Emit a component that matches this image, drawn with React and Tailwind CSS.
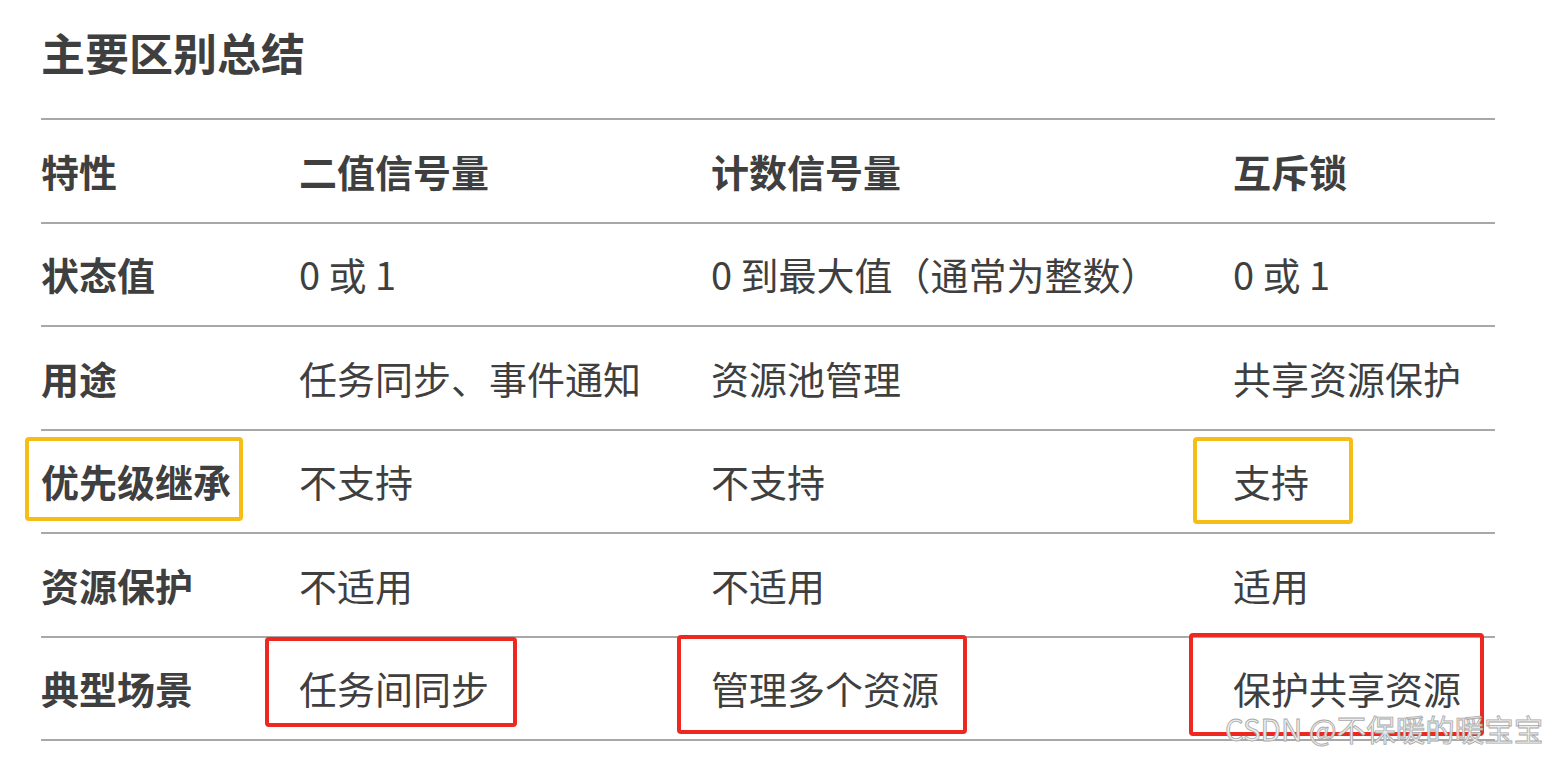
import React from "react";

const font = { fontFamily: '"Noto Sans CJK SC", "Noto Sans", sans-serif' };

const rows = [
  ["状态值", "0 或 1", "0 到最大值（通常为整数）", "0 或 1"],
  ["用途", "任务同步、事件通知", "资源池管理", "共享资源保护"],
  ["优先级继承", "不支持", "不支持", "支持"],
  ["资源保护", "不适用", "不适用", "适用"],
  ["典型场景", "任务间同步", "管理多个资源", "保护共享资源"],
];

const cols = ["w-[258px]", "w-[412px]", "w-[522px]", "flex-1"];

function Row({ cells, header }) {
  return (
    <div className="flex h-[103.5px] items-center border-b-2 border-[#a8a8a8]">
      {cells.map((c, i) => (
        <div
          key={i}
          className={`${cols[i]} text-[38px] leading-none text-[#3f3f3f] ${
            header || i === 0 ? "font-bold" : "font-normal"
          }`}
        >
          {c}
        </div>
      ))}
    </div>
  );
}

export default function App() {
  return (
    <div className="relative w-[1549px] h-[759px] overflow-hidden bg-white" style={font}>
      <div className="pl-[41px] w-[1495px]">
        <div className="h-[118px] flex items-center pb-[14px]">
          <h1 className="text-[44px] font-bold leading-none text-[#3f3f3f]">主要区别总结</h1>
        </div>
        <div className="border-t-2 border-[#a8a8a8]">
          <Row header cells={["特性", "二值信号量", "计数信号量", "互斥锁"]} />
          {rows.map((r, i) => (
            <Row key={i} cells={r} />
          ))}
        </div>
      </div>

      {/* highlight boxes drawn over the table */}
      <div className="absolute left-[25px] top-[437px] w-[218px] h-[84px] border-[4px] border-[#f7bd17] rounded-[4px]" />
      <div className="absolute left-[1193px] top-[437px] w-[160px] h-[87px] border-[4px] border-[#f7bd17] rounded-[4px]" />
      <div className="absolute left-[265px] top-[637px] w-[252px] h-[90px] border-[4px] border-[#ec2820] rounded-[4px]" />
      <div className="absolute left-[677px] top-[635px] w-[290px] h-[99px] border-[4px] border-[#ec2820] rounded-[4px]" />
      <div className="absolute left-[1189px] top-[633px] w-[295px] h-[103px] border-[4px] border-[#ec2820] rounded-[4px]" />

      {/* watermark */}
      <div
        className="absolute left-[1225px] top-[714px] text-[29.5px] leading-none text-[#ececec] whitespace-nowrap"
        style={{ WebkitTextStroke: "0.8px #a9a9a9", fontFamily: '"Noto Sans CJK SC", sans-serif' }}
      >
        CSDN @不保暖的暖宝宝
      </div>
    </div>
  );
}
